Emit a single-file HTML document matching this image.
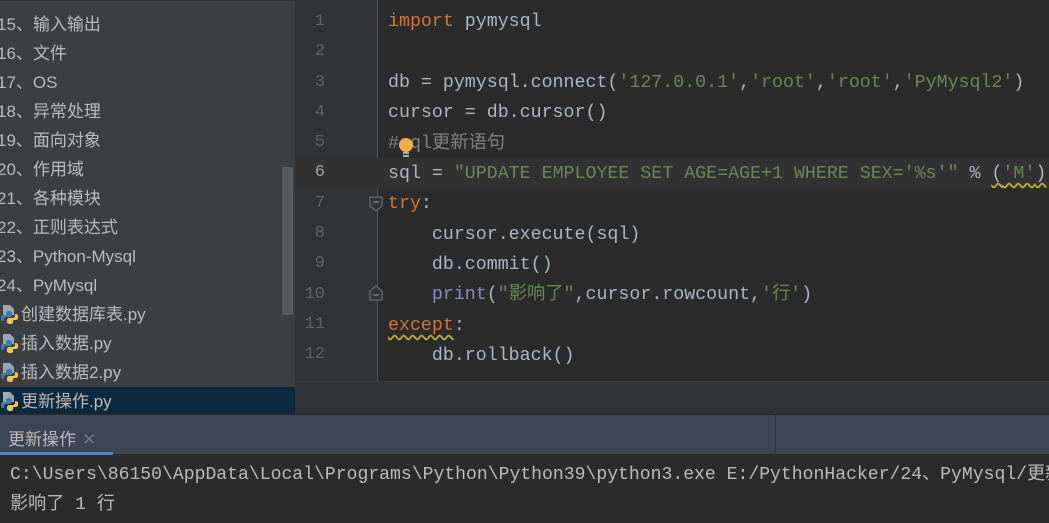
<!DOCTYPE html>
<html><head><meta charset="utf-8"><style>
*{margin:0;padding:0;box-sizing:border-box}
body{width:1049px;height:523px;overflow:hidden;background:#2b2b2b;position:relative;font-family:"Liberation Sans","Noto Sans CJK SC",sans-serif}
#side{position:absolute;left:0;top:0;width:295px;height:414px;background:#3c3f41;border-top:1px solid #323232}
.it{position:absolute;left:-3px;height:29px;line-height:29px;font-size:17px;color:#bbbbbb;white-space:nowrap}
.f{left:0}
.f svg{vertical-align:middle;margin-right:2px;position:relative;top:-2px}
.sel{position:absolute;left:0;top:386px;width:295px;height:28px;background:#0d293e}
#sb{position:absolute;left:282px;top:166px;width:11px;height:148px;background:#595b5d;border-radius:1px}
#gut{position:absolute;left:295px;top:0;width:82px;height:381px;background:#313335}
#ed{position:absolute;left:377px;top:0;width:672px;height:381px;background:#2b2b2b;border-left:1px solid #555}
.cur{position:absolute;left:295px;top:158px;width:754px;height:30px;background:#323232}
.ln{position:absolute;left:291px;width:34px;text-align:right;font:17px "Liberation Mono",monospace;color:#606366;height:30px;line-height:30px}
.c{position:absolute;left:388px;font:18.3px "Liberation Mono","Noto Sans CJK SC",monospace;color:#a9b7c6;white-space:pre;height:30px;line-height:30px}
.k{color:#cc7832}.s{color:#6a8759}.cm{color:#808080}.b{color:#8888c6}
.sq{text-decoration:underline wavy #bbb529;text-underline-offset:4px}
#gap{position:absolute;left:295px;top:381px;width:754px;height:33px;background:#313335;border-top:1px solid #3a3a3a}
#tabs{position:absolute;left:0;top:414px;width:1049px;height:40px;background:#3c4552;border-top:1px solid #2b2b2b}
#tab{position:absolute;left:8px;top:10px;font-size:17px;color:#bbbbbb}
#tab span{color:#777;margin-left:6px}
#ul{position:absolute;left:0;top:37px;width:113px;height:3px;background:#4a88c7}
#dv{position:absolute;left:775px;top:0;width:1px;height:38px;background:#2e333a}
#con{position:absolute;left:0;top:454px;width:1049px;height:69px;overflow:hidden}
.o{position:absolute;left:10px;font:18.1px "Liberation Mono","Noto Sans CJK SC",monospace;color:#bbbbbb;white-space:pre}
</style></head><body>
<div id="side">
<div class="it" style="top:9px">15、输入输出</div>
<div class="it" style="top:38px">16、文件</div>
<div class="it" style="top:67px">17、OS</div>
<div class="it" style="top:96px">18、异常处理</div>
<div class="it" style="top:125px">19、面向对象</div>
<div class="it" style="top:154px">20、作用域</div>
<div class="it" style="top:183px">21、各种模块</div>
<div class="it" style="top:212px">22、正则表达式</div>
<div class="it" style="top:241px">23、Python-Mysql</div>
<div class="it" style="top:270px">24、PyMysql</div>
<div class="sel"></div>
<div class="it f" style="top:299px"><svg width="19" height="20" viewBox="0 0 19 20"><path d="M3 1h7l4 4v6H3z" fill="#9aa7b0"/><path d="M9 7c-3 0-3 1-3 2v2H3c-2 0-2 2-2 3s0 3 2 3h1v-2c0-1 1-2 2-2h4c1 0 2-1 2-2V9c0-1-1-2-3-2z" fill="#3f7cad"/><path d="M10 20c3 0 3-1 3-2v-2h3c2 0 2-2 2-3s0-3-2-3h-1v2c0 1-1 2-2 2H9c-1 0-2 1-2 2v2c0 1 1 2 3 2z" fill="#f2c744"/></svg>创建数据库表.py</div>
<div class="it f" style="top:328px"><svg width="19" height="20" viewBox="0 0 19 20"><path d="M3 1h7l4 4v6H3z" fill="#9aa7b0"/><path d="M9 7c-3 0-3 1-3 2v2H3c-2 0-2 2-2 3s0 3 2 3h1v-2c0-1 1-2 2-2h4c1 0 2-1 2-2V9c0-1-1-2-3-2z" fill="#3f7cad"/><path d="M10 20c3 0 3-1 3-2v-2h3c2 0 2-2 2-3s0-3-2-3h-1v2c0 1-1 2-2 2H9c-1 0-2 1-2 2v2c0 1 1 2 3 2z" fill="#f2c744"/></svg>插入数据.py</div>
<div class="it f" style="top:357px"><svg width="19" height="20" viewBox="0 0 19 20"><path d="M3 1h7l4 4v6H3z" fill="#9aa7b0"/><path d="M9 7c-3 0-3 1-3 2v2H3c-2 0-2 2-2 3s0 3 2 3h1v-2c0-1 1-2 2-2h4c1 0 2-1 2-2V9c0-1-1-2-3-2z" fill="#3f7cad"/><path d="M10 20c3 0 3-1 3-2v-2h3c2 0 2-2 2-3s0-3-2-3h-1v2c0 1-1 2-2 2H9c-1 0-2 1-2 2v2c0 1 1 2 3 2z" fill="#f2c744"/></svg>插入数据2.py</div>
<div class="it f" style="top:386px"><svg width="19" height="20" viewBox="0 0 19 20"><path d="M3 1h7l4 4v6H3z" fill="#9aa7b0"/><path d="M9 7c-3 0-3 1-3 2v2H3c-2 0-2 2-2 3s0 3 2 3h1v-2c0-1 1-2 2-2h4c1 0 2-1 2-2V9c0-1-1-2-3-2z" fill="#3f7cad"/><path d="M10 20c3 0 3-1 3-2v-2h3c2 0 2-2 2-3s0-3-2-3h-1v2c0 1-1 2-2 2H9c-1 0-2 1-2 2v2c0 1 1 2 3 2z" fill="#f2c744"/></svg>更新操作.py</div>
<div id="sb"></div>
</div>
<div id="gut"></div>
<div id="ed"></div>
<div class="cur"></div>
<div class="ln" style="top:7px">1</div>
<div class="ln" style="top:37px">2</div>
<div class="ln" style="top:68px">3</div>
<div class="ln" style="top:98px">4</div>
<div class="ln" style="top:128px">5</div>
<div class="ln" style="top:158px;color:#a4a3a3">6</div>
<div class="ln" style="top:189px">7</div>
<div class="ln" style="top:219px">8</div>
<div class="ln" style="top:249px">9</div>
<div class="ln" style="top:280px">10</div>
<div class="ln" style="top:310px">11</div>
<div class="ln" style="top:340px">12</div>
<svg style="position:absolute;left:369px;top:196px" width="14" height="16"><path d="M1 1h12v9l-6 5-6-5z" fill="#313335" stroke="#777"/><path d="M4 6h6" stroke="#999"/></svg>
<svg style="position:absolute;left:369px;top:285px" width="14" height="16"><path d="M1 15h12V6L7 1 1 6z" fill="#313335" stroke="#777"/><path d="M4 10h6" stroke="#999"/></svg>
<div class="c" style="top:7px"><span class="k">import</span> pymysql</div>
<div class="c" style="top:68px">db = pymysql.connect(<span class="s">'127.0.0.1'</span>,<span class="s">'root'</span>,<span class="s">'root'</span>,<span class="s">'PyMysql2'</span>)</div>
<div class="c" style="top:98px">cursor = db.cursor()</div>
<div class="c cm" style="top:129px">#sql更新语句</div>
<svg style="position:absolute;left:397px;top:137px" width="18" height="22"><circle cx="9" cy="8" r="7" fill="#f4af3d"/><rect x="6" y="15" width="6" height="2" fill="#aaa"/><rect x="6" y="18" width="6" height="2" fill="#aaa"/></svg>
<div class="c" style="top:159px">sql = <span class="s">"UPDATE EMPLOYEE SET AGE=AGE+1 WHERE SEX='%s'"</span> % <span class="sq">(<span class="s">'M'</span>)</span></div>
<div class="c k" style="top:189px">try<span style="color:#a9b7c6">:</span></div>
<div class="c" style="top:220px">    cursor.execute(sql)</div>
<div class="c" style="top:250px">    db.commit()</div>
<div class="c" style="top:280px">    <span class="b">print</span>(<span class="s">"影响了"</span>,cursor.rowcount,<span class="s">'行'</span>)</div>
<div class="c" style="top:311px"><span class="k sq">except</span>:</div>
<div class="c" style="top:341px">    db.rollback()</div>
<div id="gap"></div>
<div id="tabs"><div id="tab">更新操作<span>✕</span></div><div id="ul"></div><div id="dv"></div></div>
<div id="con">
<div class="o" style="top:5px">C:\Users\86150\AppData\Local\Programs\Python\Python39\python3.exe E:/PythonHacker/24、PyMysql/更新操作.py</div>
<div class="o" style="top:35px">影响了 1 行</div>
</div>
</body></html>
